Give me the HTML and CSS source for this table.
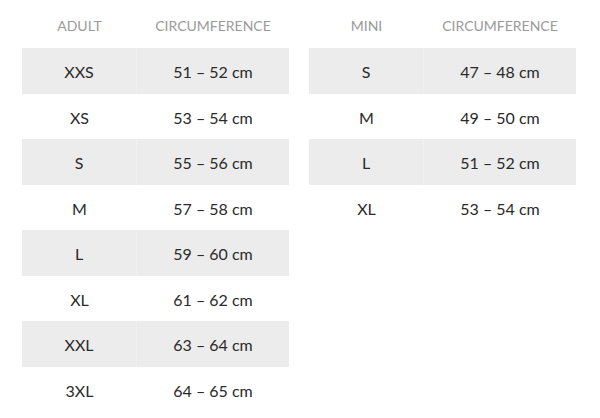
FILE: index.html
```html
<!DOCTYPE html>
<html>
<head>
<meta charset="utf-8">
<link rel="stylesheet" href="styles.css">
</head>
<body>
<div class="wrap">
  <div class="tbl">
    <div class="row head"><div>ADULT</div><div>CIRCUMFERENCE</div></div>
    <div class="row alt"><div>XXS</div><div>51 – 52 cm</div></div>
    <div class="row"><div>XS</div><div>53 – 54 cm</div></div>
    <div class="row alt"><div>S</div><div>55 – 56 cm</div></div>
    <div class="row"><div>M</div><div>57 – 58 cm</div></div>
    <div class="row alt"><div>L</div><div>59 – 60 cm</div></div>
    <div class="row"><div>XL</div><div>61 – 62 cm</div></div>
    <div class="row alt"><div>XXL</div><div>63 – 64 cm</div></div>
    <div class="row"><div>3XL</div><div>64 – 65 cm</div></div>
  </div>
  <div class="tbl">
    <div class="row head"><div>MINI</div><div>CIRCUMFERENCE</div></div>
    <div class="row alt"><div>S</div><div>47 – 48 cm</div></div>
    <div class="row"><div>M</div><div>49 – 50 cm</div></div>
    <div class="row alt"><div>L</div><div>51 – 52 cm</div></div>
    <div class="row"><div>XL</div><div>53 – 54 cm</div></div>
  </div>
</div>
</body>
</html>
```
FILE: styles.css
```css
html, body {
  margin: 0;
  padding: 0;
  background: #ffffff;
}
body {
  font-family: Lato, "Open Sans", sans-serif;
  color: #2a2a2a;
}
.wrap {
  display: flex;
  align-items: flex-start;
  gap: 20px;
  padding-left: 22px;
}
.tbl {
  width: 267px;
  display: flex;
  flex-direction: column;
}
.row {
  display: grid;
  grid-template-columns: 115px 152px;
  height: 45.5px;
  align-items: center;
  text-align: center;
  font-size: 16px;
}
.row > div {
  height: 100%;
  display: flex;
  align-items: center;
  justify-content: center;
  padding-top: 2px;
  box-sizing: border-box;
}
.row.alt {
  background: #ececec;
}
.row.alt > div:first-child {
  border-right: 1px solid #f0f0f0;
}
.row.head {
  height: 48px;
  font-size: 14px;
  color: #9a9a9a;
}
.row.head > div {
  align-items: flex-start;
  padding-top: 17px;
  line-height: 17px;
}
```
